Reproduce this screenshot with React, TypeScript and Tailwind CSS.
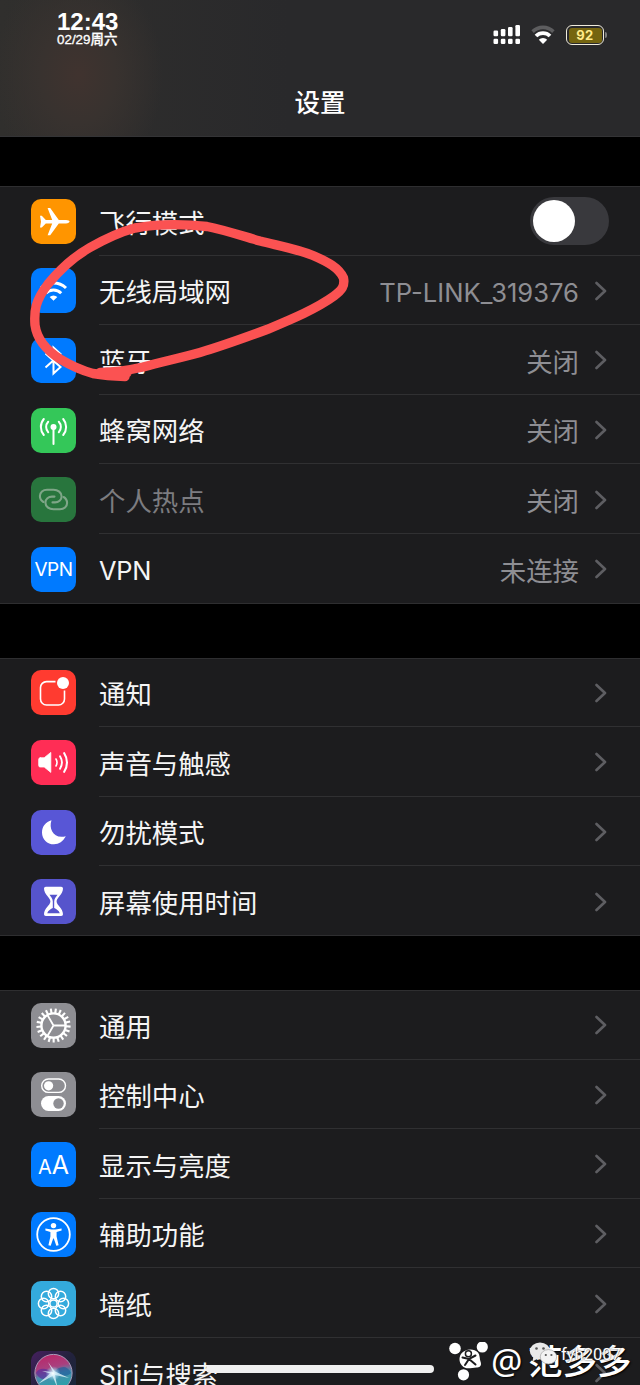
import React from 'react';

interface SettingItem {
  id: string;
  label: string;
  tile: string;
  icon: React.ReactNode;
  value?: string;
  toggle?: boolean;
  disabled?: boolean;
  latin?: boolean; // label/value without CJK characters
}

const PlaneIcon = () => (
  <svg viewBox="0 0 45 45" className="w-full h-full" fill="#fff">
    <path d="M9 16.8 h1.8 l4 4.2 h6.4 l-4.6 -12 h2.6 l8.6 12 h7.2 c2.2 0 3.6 0.8 3.6 1.6 s-1.4 1.8 -3.6 1.8 h-7.2 l-8.6 11.8 h-2.6 l4.6 -11.8 h-6.4 l-4 4.2 H9 l1 -5.9z" />
  </svg>
);

const WifiIcon = () => (
  <svg viewBox="0 0 45 45" className="w-full h-full" fill="none" stroke="#fff" strokeWidth="3">
    <path d="M10 20 a18 18 0 0 1 25 0" />
    <path d="M14.8 25.2 a11 11 0 0 1 15.4 0" />
    <path d="M22.5 32.8 l-3.8 -3.7 a5.4 5.4 0 0 1 7.6 0z" fill="#fff" stroke="none" />
  </svg>
);

const BluetoothIcon = () => (
  <svg viewBox="0 0 45 45" className="w-full h-full" fill="none" stroke="#fff" strokeWidth="2">
    <path d="M14.5 15.5 L29.5 29 L22.5 35.5 V9.5 L29.5 16 L14.5 29.5" />
  </svg>
);

const CellularIcon = () => (
  <svg viewBox="0 0 45 45" className="w-full h-full" fill="none" stroke="#fff" strokeWidth="2" strokeLinecap="round">
    <circle cx="22.5" cy="19" r="3" fill="#fff" stroke="none" />
    <path d="M22.5 20 V36" />
    <path d="M17.2 13.8 a7.6 7.6 0 0 0 0 10.4 M27.8 13.8 a7.6 7.6 0 0 1 0 10.4" />
    <path d="M12.8 11 a12.4 12.4 0 0 0 0 16 M32.2 11 a12.4 12.4 0 0 1 0 16" />
  </svg>
);

const link = 'M12.4 25 C10 23.6 8.9 21.2 8.9 19 C8.9 15.4 12 12.8 16 12.8 H22.5 C27 12.8 30.6 15.6 30.6 19.4 C30.6 23 27.5 25.4 24 25.4 H21.5';

const HotspotIcon = () => (
  <svg viewBox="0 0 45 45" className="w-full h-full" fill="none" stroke="#7fa688" strokeWidth="2.1" strokeLinecap="round">
    <path d={link} />
    <path d={link} transform="rotate(180 22.5 22.5)" />
  </svg>
);

const NotificationsIcon = () => (
  <svg viewBox="0 0 45 45" className="w-full h-full" fill="none" stroke="#fff" strokeWidth="1.6">
    <path d="M24.5 11.6 H15.5 a6 6 0 0 0 -6 6 V29 a6 6 0 0 0 6 6 H27.5 a6 6 0 0 0 6 -6 V20.5" />
    <circle cx="32" cy="13" r="6" fill="#fff" stroke="none" />
  </svg>
);

const SoundIcon = () => (
  <svg viewBox="0 0 45 45" className="w-full h-full" fill="none" stroke="#fff" strokeLinecap="round">
    <path d="M9.2 17.8 h4 l6.6 -5.4 v20 l-6.6 -5.4 h-4 a1.5 1.5 0 0 1 -1.5 -1.5 v-6.2 a1.5 1.5 0 0 1 1.5 -1.5z" fill="#fff" strokeWidth="0.8" strokeLinejoin="round" />
    <path d="M25 19 a7 7 0 0 1 0 7" strokeWidth="1.6" />
    <path d="M29 16.2 a12 12 0 0 1 0 12.6" strokeWidth="1.9" />
    <path d="M33.2 13.2 a17 17 0 0 1 0 18.6" strokeWidth="2.1" />
  </svg>
);

const MoonIcon = () => (
  <svg viewBox="0 0 45 45" className="w-full h-full" fill="#fff">
    <path d="M20.5 10.3 C17.5 18.5 22.5 29.5 34.8 26.3 C32 31.5 28 34.3 23 34.3 C16.2 34.3 11 29.2 11 22.4 C11 16.5 14.8 11.8 20.5 10.3z" />
  </svg>
);

const HourglassIcon = () => (
  <svg viewBox="0 0 45 45" className="w-full h-full">
    <path d="M14.8 7.8 H30.2 a1.8 1.8 0 0 1 1.8 1.8 C32 15.5 25.6 19 25.6 22.5 S32 29.5 32 35.2 a1.8 1.8 0 0 1 -1.8 1.8 H14.8 a1.8 1.8 0 0 1 -1.8 -1.8 C13 29.5 19.4 26 19.4 22.5 S13 15.5 13 9.6 a1.8 1.8 0 0 1 1.8 -1.8z" fill="#fff" />
    <path d="M18.5 15.8 H26.5 C25.2 18 23.2 19.4 23.2 22.5 V29 C25 30 28 31.3 28.8 34.2 H16.2 C17 31.3 20 30 21.8 29 V22.5 C21.8 19.4 19.8 18 18.5 15.8z" fill="#5654cc" />
  </svg>
);

const teeth = Array.from({ length: 21 }, (_, i) => (i * 360) / 21);

const GearIcon = () => (
  <svg viewBox="0 0 45 45" className="w-full h-full" fill="none" stroke="#fff">
    {teeth.map(a => (
      <path key={a} d="M22.5 5.4 V10" strokeWidth="2.1" transform={`rotate(${a + 8} 22.5 22.5)`} />
    ))}
    <circle cx="22.5" cy="22.5" r="12.1" strokeWidth="2.4" />
    <path d="M22.5 22.5 H34 M22.5 22.5 L16.7 12.5 M22.5 22.5 L16.7 32.5" strokeWidth="1.8" />
  </svg>
);

const ControlIcon = () => (
  <svg viewBox="0 0 45 45" className="w-full h-full">
    <rect x="10.7" y="7" width="23.8" height="13.4" rx="6.7" fill="none" stroke="#fff" strokeWidth="1.4" />
    <circle cx="17.6" cy="13.8" r="4.6" fill="#fff" />
    <rect x="10" y="24" width="25" height="15" rx="7.5" fill="#fff" />
    <circle cx="27.5" cy="31.5" r="5.2" fill="#8e8e93" />
  </svg>
);

const AccessibilityIcon = () => (
  <svg viewBox="0 0 45 45" className="w-full h-full" fill="#fff">
    <circle cx="22.5" cy="22.5" r="16.3" fill="none" stroke="#fff" strokeWidth="1.8" />
    <circle cx="22.5" cy="13.6" r="2.7" />
    <path d="M14.4 16.6 L20.5 17.6 H24.5 L30.6 16.6 V18.6 L25.6 19.9 V24.5 L27.6 33.2 L25.3 33.8 L22.8 26.5 H22.2 L19.7 33.8 L17.4 33.2 L19.4 24.5 V19.9 L14.4 18.6z" />
  </svg>
);

const petals = [0, 45, 90, 135, 180, 225, 270, 315];

const WallpaperIcon = () => (
  <svg viewBox="0 0 45 45" className="w-full h-full" fill="none" stroke="#fff" strokeWidth="1.5">
    {petals.map(a => (
      <circle key={a} cx="22.5" cy="12.6" r="5.2" transform={`rotate(${a} 22.5 22.5)`} />
    ))}
    <circle cx="22.5" cy="22.5" r="3.6" />
  </svg>
);

const SiriIcon = () => (
  <svg viewBox="0 0 45 45" className="w-full h-full">
    <defs>
      <linearGradient id="siriBg" x1="0" y1="0" x2="1" y2="1">
        <stop offset="0" stopColor="#46205f" />
        <stop offset="0.5" stopColor="#22223c" />
        <stop offset="1" stopColor="#16293a" />
      </linearGradient>
      <linearGradient id="siriOrb" x1="0.35" y1="0" x2="0.6" y2="1">
        <stop offset="0" stopColor="#b92768" />
        <stop offset="0.35" stopColor="#a9407f" />
        <stop offset="0.55" stopColor="#4b8fae" />
        <stop offset="1" stopColor="#1fa7a8" />
      </linearGradient>
      <radialGradient id="siriGlow">
        <stop offset="0" stopColor="#fff" />
        <stop offset="0.4" stopColor="#d9f4ff" stopOpacity="0.6" />
        <stop offset="1" stopColor="#9fe0ff" stopOpacity="0" />
      </radialGradient>
    </defs>
    <rect width="45" height="45" fill="url(#siriBg)" />
    <circle cx="22.5" cy="22" r="18.6" fill="url(#siriOrb)" stroke="#a99bb9" strokeWidth="1" />
    <path d="M5 22 C9 30 16 30 22 22 C16 17 8 16 5 22z" fill="#5b2c9c" opacity="0.7" />
    <path d="M40 22 C36 13 28 15 22 22 C30 26 36 26 40 22z" fill="#1d5c9b" opacity="0.65" />
    <path d="M22 21 L17 11 L24 20.5 L38 27 L24 24 L26.5 37 L21.5 25 L7 33 L19 22.5 L11 20z" fill="#eafcff" opacity="0.75" />
    <circle cx="22" cy="22.5" r="7.5" fill="url(#siriGlow)" />
  </svg>
);

const groups: SettingItem[][] = [
  [
    { id: 'airplane', label: '飞行模式', tile: 'bg-[#ff9500]', icon: <PlaneIcon />, toggle: true },
    { id: 'wifi', label: '无线局域网', tile: 'bg-[#007aff]', icon: <WifiIcon />, value: 'TP-LINK_319376' },
    { id: 'bluetooth', label: '蓝牙', tile: 'bg-[#007aff]', icon: <BluetoothIcon />, value: '关闭' },
    { id: 'cellular', label: '蜂窝网络', tile: 'bg-[#34c759]', icon: <CellularIcon />, value: '关闭' },
    { id: 'hotspot', label: '个人热点', tile: 'bg-[#28753d]', icon: <HotspotIcon />, value: '关闭', disabled: true },
    { id: 'vpn', label: 'VPN', latin: true, tile: 'bg-[#007aff]', icon: <span className="text-[19px] leading-none text-white -tracking-[0.5px]">VPN</span>, value: '未连接' },
  ],
  [
    { id: 'notifications', label: '通知', tile: 'bg-[#ff3b30]', icon: <NotificationsIcon /> },
    { id: 'sound', label: '声音与触感', tile: 'bg-[#ff2d55]', icon: <SoundIcon /> },
    { id: 'dnd', label: '勿扰模式', tile: 'bg-[#5856d6]', icon: <MoonIcon /> },
    { id: 'screentime', label: '屏幕使用时间', tile: 'bg-[#5654cc]', icon: <HourglassIcon /> },
  ],
  [
    { id: 'general', label: '通用', tile: 'bg-[#8e8e93]', icon: <GearIcon /> },
    { id: 'control', label: '控制中心', tile: 'bg-[#8e8e93]', icon: <ControlIcon /> },
    {
      id: 'display',
      label: '显示与亮度',
      tile: 'bg-[#007aff]',
      icon: (
        <span className="flex items-baseline leading-none text-white pt-0.5">
          <span className="text-[20px]">A</span>
          <span className="text-[25px]">A</span>
        </span>
      ),
    },
    { id: 'accessibility', label: '辅助功能', tile: 'bg-[#007aff]', icon: <AccessibilityIcon /> },
    { id: 'wallpaper', label: '墙纸', tile: 'bg-[#34aadc]', icon: <WallpaperIcon /> },
    { id: 'siri', label: 'Siri与搜索', tile: 'bg-[#22223c]', icon: <SiriIcon /> },
  ],
];

const Chevron = () => (
  <svg viewBox="0 0 12 20" className="w-3 h-5 ml-4 mt-0.5 shrink-0" fill="none" stroke="#5e5e62" strokeWidth="2.6" strokeLinecap="round" strokeLinejoin="round">
    <path d="M1.5 2 L10 10 L1.5 18" />
  </svg>
);

function Row({ item, last }: { item: SettingItem; last: boolean }) {
  return (
    <div className="flex h-[69.6px] shrink-0 pl-[31px]">
      <div className="flex items-center shrink-0 pt-px">
        <div className={`w-[45px] h-[45px] rounded-[10px] overflow-hidden flex items-center justify-center ${item.tile}`}>
          {item.icon}
        </div>
      </div>
      <div className={`flex-1 ml-[23px] pr-[33px] flex items-center border-b ${last ? 'border-transparent' : 'border-[#303032]'}`}>
        <span
          className={`flex-1 leading-none pt-[5px] whitespace-nowrap ${item.latin ? 'text-[25.4px] -tracking-[0.3px]' : 'text-[26.4px]'} ${
            item.disabled ? 'text-[#7c7c80]' : 'text-[#f5f5f5]'
          }`}
        >
          {item.label}
        </span>
        {item.value && (
          <span className={`leading-none pt-[5px] whitespace-nowrap text-[#8e8e93] ${item.id === 'wifi' ? 'text-[25.6px]' : 'text-[26.4px]'}`}>
            {item.value}
          </span>
        )}
        {item.toggle ? (
          <span className="w-[79px] h-12 -mr-0.5 mt-px rounded-full bg-[#39393d] p-[3px]">
            <span className="block w-[42px] h-[42px] rounded-full bg-white" />
          </span>
        ) : (
          <Chevron />
        )}
      </div>
    </div>
  );
}

function StatusBar() {
  return (
    <div className="flex justify-between pl-[57px] pr-[33px] pt-[11px] text-white">
      <div className="w-[64px] flex flex-col font-['Liberation_Sans','Noto_Sans_CJK_SC',sans-serif]">
        <span className="text-[24px] leading-[21px] font-bold whitespace-nowrap">12:43</span>
        <span className="text-[13.4px] leading-[15px] font-medium whitespace-nowrap [-webkit-text-stroke:0.3px_#fff]">02/29周六</span>
      </div>
      <div className="flex items-start pt-[13px]">
        <svg viewBox="0 0 28 21" className="w-7 h-[21px]" fill="#fff">
          <rect x="0.5" y="6.5" width="4.6" height="5.7" rx="1.2" />
          <rect x="7.8" y="5" width="4.6" height="7.2" rx="1.2" />
          <rect x="15" y="3" width="4.6" height="9.2" rx="1.2" />
          <rect x="22.4" y="1" width="4.6" height="11.2" rx="1.2" />
          <rect x="0.5" y="14.8" width="4.6" height="5.2" rx="1.2" />
          <rect x="7.8" y="14.8" width="4.6" height="5.2" rx="1.2" />
          <rect x="15" y="14.8" width="4.6" height="5.2" rx="1.2" />
          <rect x="22.4" y="14.8" width="4.6" height="5.2" rx="1.2" />
        </svg>
        <svg viewBox="0 0 24 20" className="w-6 h-5 ml-2.5" fill="none">
          <path d="M1.6 7.6 a15 15 0 0 1 20.8 0" stroke="#5d5d5f" strokeWidth="3.6" />
          <path d="M5 12 a10 10 0 0 1 14 0" stroke="#fff" strokeWidth="3.8" />
          <path d="M12 20 L7.8 15.8 a5.8 5.8 0 0 1 8.4 0z" fill="#fff" />
        </svg>
        <div className="flex items-center ml-[11px] mt-px">
          <div className="w-[38px] h-5 rounded-md border-[1.5px] border-[#f0ecdc] p-[1.5px]">
            <div className="h-full rounded-[3px] bg-[#75650f] flex items-center justify-center text-[13px] leading-none font-bold text-[#ffeb8a] tracking-[0.5px]">92</div>
          </div>
          <div className="w-[2px] h-1.5 ml-px rounded-r bg-[#7c7c7c]" />
        </div>
      </div>
    </div>
  );
}

// Logo + account name in the lower right corner
function Watermark() {
  return (
    <div className="absolute left-[448px] top-[1340px] w-[192px] h-[45px] text-white">
      <svg viewBox="0 0 42 42" className="absolute left-0 top-0.5 w-[42px] h-[42px]">
        <circle cx="7" cy="6.5" r="5.8" fill="#fff" />
        <circle cx="34.3" cy="5" r="5.6" fill="#fff" />
        <circle cx="15.5" cy="32.8" r="5.6" fill="#fff" />
        <path d="M13 12 C17 6.5 26 6 30 10.5 C32 13 31.5 17 32.5 19.5 C34 23.5 32 25.8 28.5 25.4 C24 25.6 19 27.5 15.5 25 C11 21.5 10.5 16 13 12z" fill="#fff" />
        <circle cx="20.4" cy="11.8" r="3" fill="none" stroke="#1c1c1e" strokeWidth="1.5" />
        <path d="M14.5 15.5 L21 17 L27.5 13.5 M21 17 L17 23 M21 17 L27.5 22.5" fill="none" stroke="#1c1c1e" strokeWidth="2" strokeLinecap="round" />
      </svg>
      <span className="absolute left-[43px] top-[3px] text-[35px] leading-none font-['Noto_Sans',sans-serif] [text-shadow:1px_1px_2px_#000]">@</span>
      <span className="absolute left-[80px] top-[5px] text-[34.5px] leading-none whitespace-nowrap font-medium [text-shadow:1px_1px_2px_#000]">范多多</span>
      <svg viewBox="0 0 28 24" className="absolute left-[81px] top-0.5 w-7 h-6">
        <ellipse cx="11" cy="9" rx="10.2" ry="8.6" fill="#e9e9e9" />
        <path d="M4.5 14 L3.5 19.5 L9 16.5z" fill="#e9e9e9" />
        <circle cx="7.5" cy="6.5" r="1.3" fill="#555" />
        <circle cx="14.5" cy="6.5" r="1.3" fill="#555" />
        <ellipse cx="19.5" cy="14.8" rx="8.2" ry="7.2" fill="#f3f3f3" stroke="#999" strokeWidth="0.6" />
        <circle cx="16.8" cy="13" r="1.1" fill="#555" />
        <circle cx="22.4" cy="13" r="1.1" fill="#555" />
      </svg>
      <span className="absolute left-[113px] top-[7px] text-[16.5px] leading-none whitespace-nowrap font-['Roboto',sans-serif] [text-shadow:0_0_2px_#333]">fyh2007</span>
    </div>
  );
}

export default function App() {
  return (
    <div className="relative w-[640px] h-[1385px] overflow-hidden bg-black font-['Inter','Noto_Sans_CJK_SC',sans-serif]">
      <header className="h-[136.5px] border-b border-[#343436] bg-[#29292b] bg-[radial-gradient(ellipse_85px_110px_at_78px_75px,#40332f,#38322f_45%,transparent),linear-gradient(90deg,#302f2d,#29292b_45%)]">
        <StatusBar />
        <h1 className="mt-[41px] text-center text-[25.5px] leading-[30px] font-medium text-white">设置</h1>
      </header>

      <main className="flex flex-col gap-[54px] pt-[49.5px]">
        {groups.map((items, i) => (
          <section key={i} className="bg-[#1c1c1e] shadow-[inset_0_1px_#2e2e30,inset_0_-1px_#2e2e30]">
            {items.map((item, j) => (
              <Row key={item.id} item={item} last={j === items.length - 1} />
            ))}
          </section>
        ))}
      </main>

      {/* Hand-drawn mark around the Wi-Fi row */}
      <svg viewBox="0 0 360 180" className="absolute left-0 top-[210px] w-[360px] h-[180px]" fill="none" stroke="#fb5252" strokeWidth="9.4" strokeLinecap="round" strokeLinejoin="round">
        <path d="M125 166.5 C112 166 102 165 93 163.5 C80 160 70 155 60 149 C46 140 37 130 35 115 C34 101 35 91 48 74 C62 57 75 46 90 37.5 C105 29 120 22 135 18 C160 13.5 185 14 207 16.5 C225 20 242 26 260 31 C280 36 297 39 313 45.5 C328 52 339 58 343.5 68 C345 76 342 80 334 86 C316 99 292 109 267 119.5 C244 128 222 136 200 142.5 C180 148 161 152 143 157 C130 160 115 162 100 162.5 C108 163 118 163 127 163" />
      </svg>

      {/* Home indicator */}
      <div className="absolute left-[206px] top-[1364.5px] w-[228px] h-[8px] rounded-full bg-[#f0f0f0]" />

      <Watermark />
    </div>
  );
}
